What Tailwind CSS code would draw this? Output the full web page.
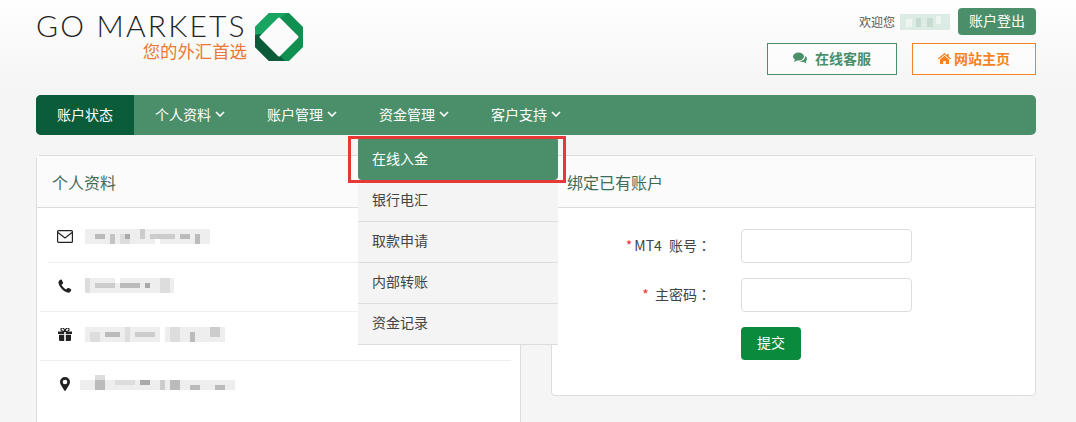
<!doctype html>
<html>
<head>
  <meta charset="UTF-8">
  <script src="https://cdn.jsdelivr.net/npm/@tailwindcss/browser@4"></script>
</head>
<body class="relative h-[422px] overflow-hidden bg-[#f5f5f5] bg-gradient-to-b from-[#fefefe] to-[#f5f5f5] to-[90px] font-['Noto_Sans_CJK_SC','Noto_Sans',sans-serif] text-[14px] text-[#444]">
  <div class="ml-[36px] w-[1000px]">
    <!-- header -->
    <header class="flex h-[95px] justify-between">
      <div class="flex items-start pt-[13px]">
        <div class="flex w-[212px] flex-col items-end">
          <div class="h-[27px] w-full whitespace-nowrap font-['Lato','Inter',sans-serif] text-[30px] leading-[25px] font-light tracking-[2.2px] text-[#222]">GO MARKETS</div>
          <div class="mr-[1px] text-[17.4px] leading-[22px] text-[#e87a35]">您的外汇首选</div>
        </div>
        <svg class="ml-[7px]" width="48" height="48" viewBox="0 0 48 48">
          <polygon points="14,0 34,0 48,14 48,34 34,48 14,48 0,34 0,14" fill="#0f8f50"/>
          <polygon points="14,0 32,0 24,6 6,21 0,24 0,14" fill="#18a562"/>
          <polygon points="0,22 6,21 24,42 30,48 14,48 0,34" fill="#0b5a3a"/>
          <polygon points="24,6 42,24 24,42 6,24" fill="#fbfbfb" stroke="#fbfbfb" stroke-width="3" stroke-linejoin="round"/>
        </svg>
      </div>
      <div class="flex flex-col items-end pt-[8px]">
        <div class="flex h-[27px] items-center">
          <span class="text-[12px] text-[#555]">欢迎您</span>
          <svg class="mr-[8px] ml-[5px] blur-[0.6px]" width="50" height="16" viewBox="0 0 50 16">
            <rect width="50" height="16" fill="#dcebe4"/>
            <rect x="6" y="5" width="6" height="8" fill="#eef5f1"/>
            <rect x="16" y="4" width="5" height="9" fill="#c5dbd0"/>
            <rect x="27" y="4" width="6" height="9" fill="#c8dcd2"/>
            <rect x="36" y="2" width="5" height="8" fill="#eef5f1"/>
          </svg>
          <button class="h-[27px] w-[78px] rounded-[4px] bg-[#4a8f69] pb-[2px] text-[14px] text-white">账户登出</button>
        </div>
        <div class="mt-[8px] flex gap-[15px]">
          <a class="flex h-[32px] w-[130px] items-center justify-center gap-[8px] border border-[#4a8f69] bg-white/50 pb-[2px] font-bold text-[#4a8f69]">
            <svg width="14" height="12" viewBox="0 0 14 12" fill="#4a8f69"><ellipse cx="5.5" cy="4.5" rx="5.5" ry="4"/><path d="M2 7l-1 3 4-2zM12 4c1.500.8 2 1.800 2 3 0 1-.5 1.800-1.200 2.300l.7 2.200-3-1.500c-1.500.2-3-.2-4-1 3.500 0 6-2 5.500-5z"/></svg>
            在线客服
          </a>
          <a class="flex h-[32px] w-[124px] items-center justify-center gap-[3px] border border-[#f58220] bg-white/50 pb-[2px] font-bold text-[#f58220]">
            <svg width="13" height="11" viewBox="0 0 13 11" fill="#f58220"><path d="M6.500 0L0 5.500l.8.900L6.500 1.700l5.700 4.700.8-.9-2.300-1.900V1h-1.700v1.200z"/><path d="M2 6.500L6.500 2.800 11 6.500V11H7.800V8H5.200v3H2z"/></svg>
            网站主页
          </a>
        </div>
      </div>
    </header>

    <!-- nav -->
    <nav class="flex h-[40px] overflow-hidden rounded-[5px] bg-[#4a8f69] text-white">
      <a class="flex w-[98px] items-center justify-center bg-[#0b5c3a] pb-[2px]">账户状态</a>
      <a class="flex w-[112px] items-center gap-[4px] pb-[2px] pl-[21px]">个人资料
        <svg width="10" height="6" viewBox="0 0 10 6" fill="none" stroke="white" stroke-width="1.600"><path d="M1 1l4 4 4-4"/></svg></a>
      <a class="flex w-[112px] items-center gap-[4px] pb-[2px] pl-[21px]">账户管理
        <svg width="10" height="6" viewBox="0 0 10 6" fill="none" stroke="white" stroke-width="1.600"><path d="M1 1l4 4 4-4"/></svg></a>
      <a class="flex w-[112px] items-center gap-[4px] pb-[2px] pl-[21px]">资金管理
        <svg width="10" height="6" viewBox="0 0 10 6" fill="none" stroke="white" stroke-width="1.600"><path d="M1 1l4 4 4-4"/></svg></a>
      <a class="flex w-[112px] items-center gap-[4px] pb-[2px] pl-[21px]">客户支持
        <svg width="10" height="6" viewBox="0 0 10 6" fill="none" stroke="white" stroke-width="1.600"><path d="M1 1l4 4 4-4"/></svg></a>
    </nav>

    <!-- panels -->
    <div class="mt-[20px] flex items-start gap-[30px]">
      <section class="h-[300px] w-[485px] rounded-[4px] border border-[#ddd] bg-white">
        <h3 class="flex h-[52px] items-center border-b border-[#ddd] bg-[#fbfbfb] pl-[15px] text-[16px] font-normal text-[#3f6b58]">个人资料</h3>
        <ul class="pt-[6px] pl-[3px]">
          <li class="ml-[8px] mr-[9px] flex h-[49px] items-center border-b border-[#eee] pb-[3px] pl-[9px]">
            <svg class="w-[16px]" width="16" height="13" viewBox="0 0 16 13" fill="none" stroke="#222" stroke-width="1.200"><rect x=".6" y=".6" width="14.800" height="11.800" rx="1"/><path d="M1 2.500l7 5.500 7-5.500"/></svg>
            <svg class="ml-[12px] blur-[0.6px]" width="125" height="15" viewBox="0 0 125 15">
              <rect width="125" height="15" fill="#eee"/><rect x="10" y="5" width="10" height="5" fill="#bbb"/><rect x="25" y="5" width="5" height="10" fill="#c4c4c4"/><rect x="35" y="5" width="10" height="10" fill="#ddd"/><rect x="40" y="5" width="5" height="5" fill="#aaa"/><rect x="55" y="0" width="5" height="10" fill="#ccc"/><rect x="65" y="5" width="25" height="5" fill="#ccc"/><rect x="70" y="10" width="5" height="5" fill="#fff"/><rect x="95" y="5" width="10" height="5" fill="#bbb"/><rect x="110" y="5" width="5" height="10" fill="#bbb"/>
            </svg>
          </li>
          <li class="mr-[9px] flex h-[49px] items-center border-b border-[#eee] pb-[3px] pl-[17px]">
            <svg class="w-[16px]" width="14" height="14" viewBox="0 0 14 14" fill="#222"><path d="M3.400.5C2.800.5 2 .8 1.300 1.500.5 2.400.3 3.300.6 4.500c.8 3.400 5 8.100 9 9.100 1 .2 2 0 2.700-.8.600-.7.900-1.500.9-2 0-.3-.1-.5-.4-.7L10.500 9c-.4-.2-.8-.1-1.100.2l-.9 1c-.2.200-.4.200-.7.100C6.300 9.500 4.500 7.700 3.700 6.300c-.1-.3-.1-.5.100-.7l1-.9c.3-.3.400-.7.200-1.100L3.900.9C3.800.6 3.600.5 3.400.5z"/></svg>
            <svg class="ml-[12px] blur-[0.6px]" width="89" height="15" viewBox="0 0 89 15">
              <rect width="89" height="15" fill="#eee"/><rect x="0" y="0" width="5" height="15" fill="#ddd"/><rect x="10" y="5" width="20" height="5" fill="#ccc"/><rect x="35" y="5" width="20" height="5" fill="#bbb"/><rect x="60" y="5" width="5" height="5" fill="#aaa"/><rect x="75" y="0" width="10" height="15" fill="#ddd"/><rect x="30" y="0" width="5" height="5" fill="#fff"/>
            </svg>
          </li>
          <li class="mr-[9px] flex h-[49px] items-center border-b border-[#eee] pb-[3px] pl-[17px]">
            <svg class="w-[16px]" width="14" height="13" viewBox="0 0 14 13" fill="#222"><path d="M0 3.500h6.200V6H0zM7.800 3.500H14V6H7.800zM1 6.800h5.200V13H2.200A1.200 1.200 0 0 1 1 11.800zM7.800 6.800H13v5A1.200 1.200 0 0 1 11.800 13h-4z"/><path d="M7 3.500C5 3.500 3 3 3 1.700 3 .7 3.800 0 4.500 0 5.700 0 6.500 1.500 7 3.500c.5-2 1.300-3.500 2.500-3.500C10.200 0 11 .7 11 1.700 11 3 9 3.500 7 3.500z" fill="none" stroke="#222" stroke-width="1.200"/></svg>
            <svg class="ml-[12px] blur-[0.6px]" width="140" height="15" viewBox="0 0 140 15">
              <rect width="140" height="15" fill="#eee"/><rect x="5" y="5" width="10" height="10" fill="#ddd"/><rect x="20" y="5" width="15" height="5" fill="#bbb"/><rect x="40" y="0" width="5" height="15" fill="#ddd"/><rect x="50" y="5" width="20" height="5" fill="#ccc"/><rect x="75" y="0" width="5" height="15" fill="#fff"/><rect x="85" y="0" width="10" height="15" fill="#ddd"/><rect x="105" y="5" width="5" height="10" fill="#bbb"/><rect x="125" y="0" width="10" height="10" fill="#ccc"/>
            </svg>
          </li>
          <li class="flex h-[49px] items-center pb-[3px] pl-[17px]">
            <svg class="w-[16px]" width="10" height="14" viewBox="0 0 10 14"><path fill-rule="evenodd" fill="#222" d="M5 0a5 5 0 0 1 5 5c0 1.200-.4 2-.8 2.800L5.700 13.500a.8.800 0 0 1-1.400 0L.8 7.800C.4 7 0 6.200 0 5a5 5 0 0 1 5-5zm0 2.700a2.300 2.300 0 1 0 0 4.600 2.300 2.300 0 0 0 0-4.600z"/></svg>
            <svg class="ml-[7px] blur-[0.6px]" width="155" height="19" viewBox="0 0 155 19">
              <rect y="5" width="155" height="10" fill="#eee"/><rect x="15" y="0" width="10" height="5" fill="#ddd"/><rect x="15" y="5" width="10" height="10" fill="#bbb"/><rect x="35" y="5" width="20" height="5" fill="#ddd"/><rect x="60" y="5" width="10" height="5" fill="#aaa"/><rect x="80" y="5" width="5" height="10" fill="#ccc"/><rect x="90" y="5" width="10" height="10" fill="#bbb"/><rect x="110" y="10" width="10" height="5" fill="#bbb"/><rect x="135" y="10" width="10" height="5" fill="#bbb"/>
            </svg>
          </li>
        </ul>
      </section>

      <section class="h-[241px] w-[485px] rounded-[4px] border border-[#ddd] bg-white">
        <h3 class="flex h-[52px] items-center border-b border-[#ddd] bg-[#fbfbfb] pl-[15px] text-[16px] font-normal text-[#3f6b58]">绑定已有账户</h3>
        <form class="pt-[21px]">
          <div class="flex h-[34px] items-center">
            <label class="w-[159px] pb-[2px] text-right text-[14px] text-[#444]"><span class="mr-[2px] text-[#e33]">*</span><span class="mr-[4px]">MT4</span> 账号<span class="font-['Noto_Sans_CJK_TC']">：</span></label>
            <input class="ml-[30px] h-[34px] w-[171px] rounded-[4px] border border-[#ddd] bg-white">
          </div>
          <div class="mt-[15px] flex h-[34px] items-center">
            <label class="w-[159px] pb-[2px] text-right text-[14px] text-[#444]"><span class="mr-[3px] text-[#e33]">*</span> 主密码<span class="font-['Noto_Sans_CJK_TC']">：</span></label>
            <input class="ml-[30px] h-[34px] w-[171px] rounded-[4px] border border-[#ddd] bg-white">
          </div>
          <button type="button" class="mt-[15px] ml-[189px] h-[33px] w-[60px] rounded-[4px] bg-[#0a8a3c] pb-[2px] text-white">提交</button>
        </form>
      </section>
    </div>
  </div>

  <!-- dropdown -->
  <ul class="absolute top-[137px] left-[358px] w-[200px] bg-[#f4f4f4] text-[#444]">
    <li class="flex h-[43px] items-center rounded-[4px] bg-[#4a8f69] pb-[1px] pl-[14px] text-white">在线入金</li>
    <li class="flex h-[42px] items-center border-b border-[#ddd] pb-[2px] pl-[14px]">银行电汇</li>
    <li class="flex h-[41px] items-center border-b border-[#ddd] pb-[3px] pl-[14px]">取款申请</li>
    <li class="flex h-[41px] items-center border-b border-[#ddd] pb-[3px] pl-[14px]">内部转账</li>
    <li class="flex h-[41px] items-center border-b border-[#ddd] pb-[3px] pl-[14px]">资金记录</li>
  </ul>
  <!-- annotation -->
  <div class="absolute top-[136px] left-[348px] h-[47px] w-[218px] border-[3px] border-[#e53935]"></div>
</body>
</html>
